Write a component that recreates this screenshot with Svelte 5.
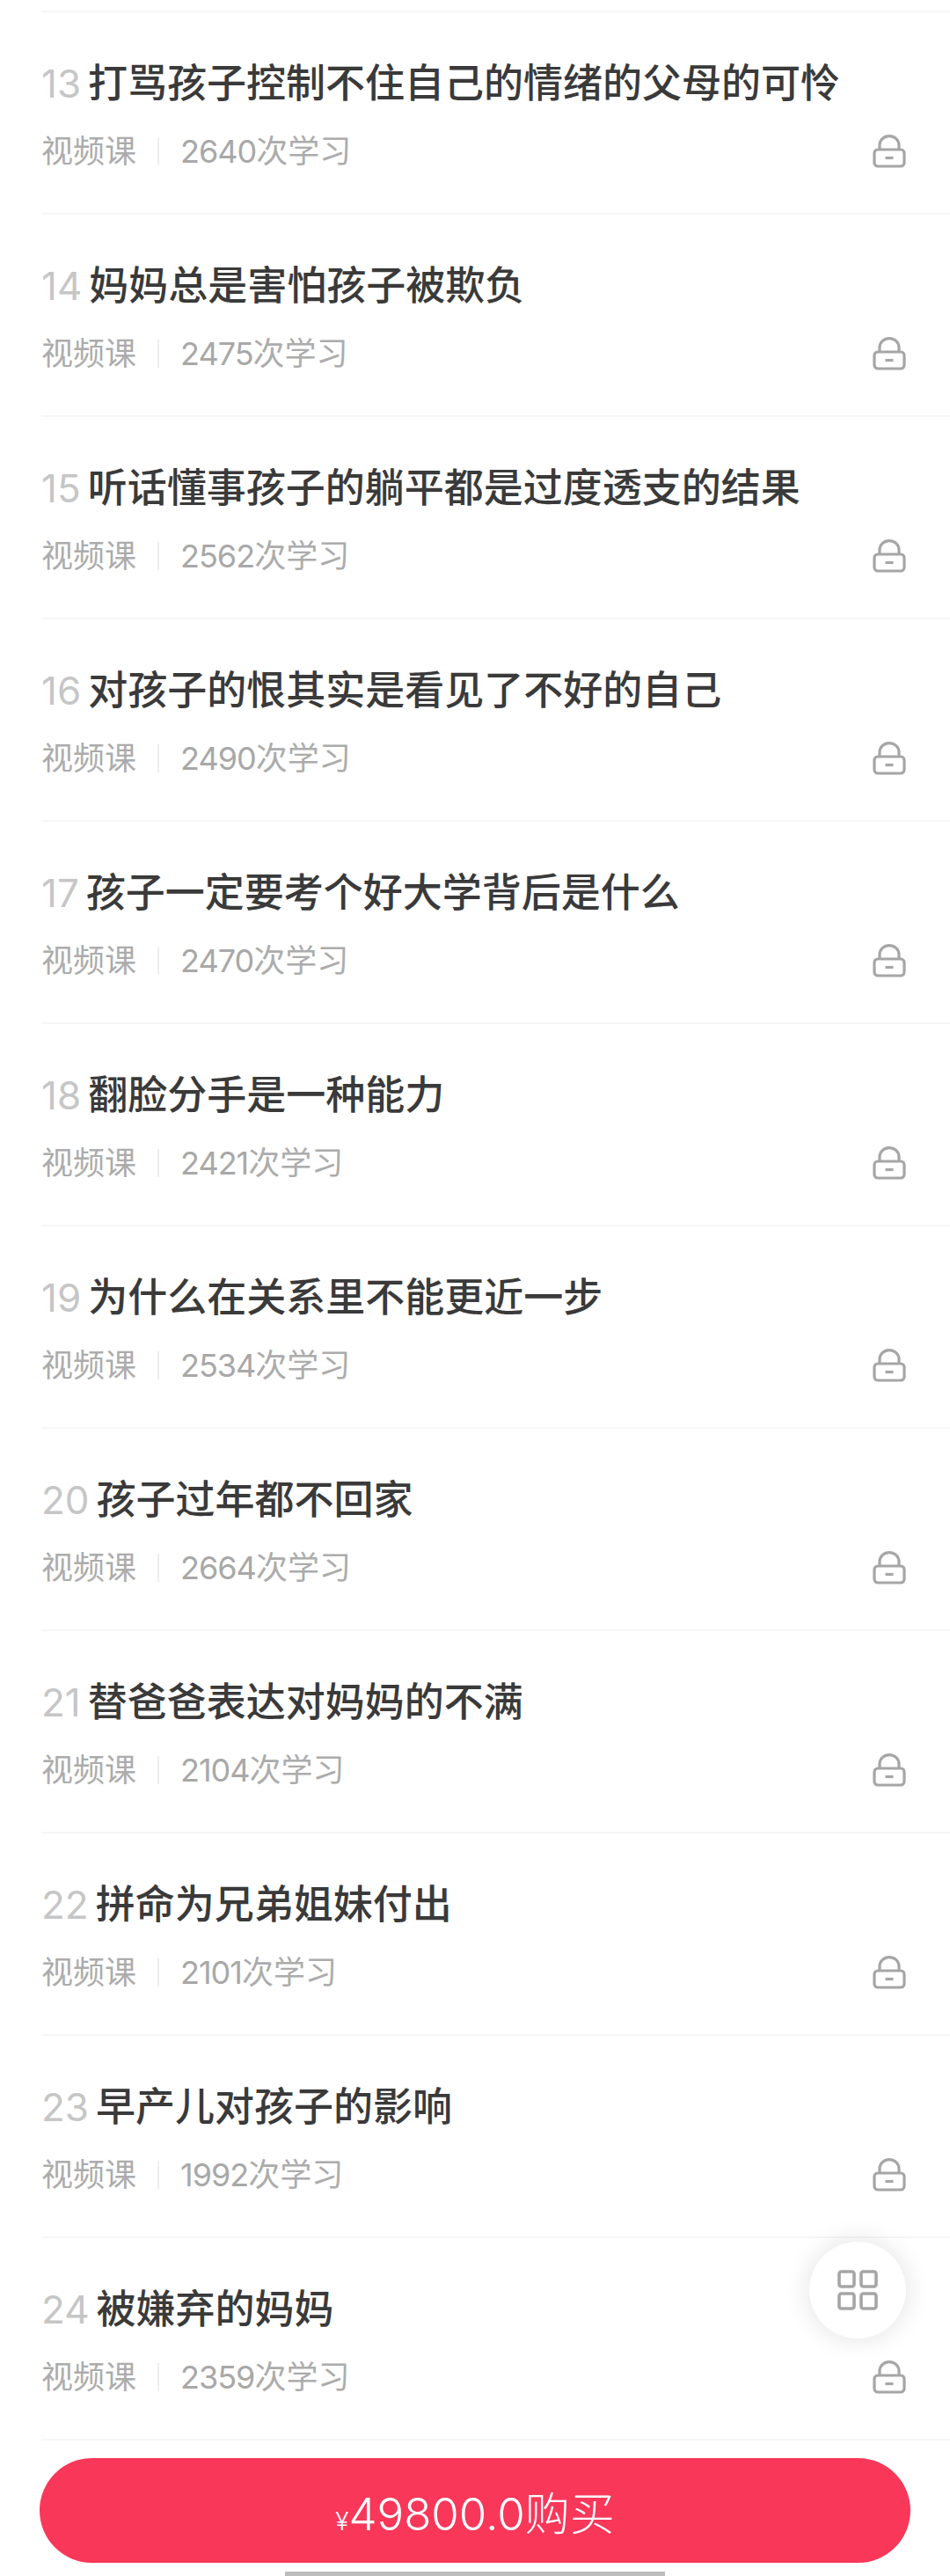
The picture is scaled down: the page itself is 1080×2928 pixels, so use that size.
<script>
  const lessons = [
    { no: 13, title: '打骂孩子控制不住自己的情绪的父母的可怜', count: 2640 },
    { no: 14, title: '妈妈总是害怕孩子被欺负', count: 2475 },
    { no: 15, title: '听话懂事孩子的躺平都是过度透支的结果', count: 2562 },
    { no: 16, title: '对孩子的恨其实是看见了不好的自己', count: 2490 },
    { no: 17, title: '孩子一定要考个好大学背后是什么', count: 2470 },
    { no: 18, title: '翻脸分手是一种能力', count: 2421 },
    { no: 19, title: '为什么在关系里不能更近一步', count: 2534 },
    { no: 20, title: '孩子过年都不回家', count: 2664 },
    { no: 21, title: '替爸爸表达对妈妈的不满', count: 2104 },
    { no: 22, title: '拼命为兄弟姐妹付出', count: 2101 },
    { no: 23, title: '早产儿对孩子的影响', count: 1992 },
    { no: 24, title: '被嫌弃的妈妈', count: 2359 }
  ];
</script>

<div class="page">
  <ul class="list">
    {#each lessons as item (item.no)}
      <li class="row">
        <div class="info">
          <div class="title"><span class="no">{item.no}</span>{item.title}</div>
          <div class="meta">
            <span>视频课</span>
            <i class="sep"></i>
            <span><span class="count">{item.count}</span>次学习</span>
          </div>
        </div>
        <svg class="lock" viewBox="0 0 38 38" fill="none" stroke="#a6a6a6" stroke-width="3.2" aria-hidden="true">
          <path d="M8 17V12a11 10.4 0 0 1 22 0v5" />
          <rect x="2" y="17" width="34" height="19" rx="4" />
          <path d="M14.5 26.5h9" />
        </svg>
      </li>
    {/each}
  </ul>

  <button class="buy"><small>¥</small>49800.0购买</button>
  <div class="home-bar"></div>

  <div class="fab">
    <svg viewBox="0 0 46 46" fill="none" stroke="#a6a6a6" stroke-width="3.6" aria-hidden="true">
      <rect x="2" y="2" width="17" height="17" rx="2.5" />
      <rect x="27" y="2" width="17" height="17" rx="2.5" />
      <rect x="2" y="27" width="17" height="17" rx="2.5" />
      <rect x="27" y="27" width="17" height="17" rx="2.5" />
    </svg>
  </div>
</div>

<style>
  :global(body) {
    margin: 0;
    background: #fff;
  }

  .page {
    position: relative;
    height: 2928px;
    overflow: hidden;
    padding-top: 12px;
    box-sizing: border-box;
    font-family: Inter, "Noto Sans CJK SC", sans-serif;
  }

  .list {
    list-style: none;
    margin: 0 0 0 47px;
    padding: 0;
    border-bottom: 2px solid #f6f6f6;
  }

  .row {
    display: flex;
    align-items: flex-start;
    justify-content: space-between;
    height: 228px;
    padding-right: 50px;
    border-top: 2px solid #f6f6f6;
  }

  .title {
    display: flex;
    align-items: center;
    gap: 8px;
    margin-top: 55px;
    height: 52px;
    font-size: 45px;
    font-weight: 500;
    line-height: 52px;
    color: #3a3a3a;
    white-space: nowrap;
  }

  .no {
    font-size: 44px;
    font-weight: 400;
    color: #c6c6c6;
  }

  .meta {
    display: flex;
    align-items: center;
    margin-top: 29px;
    height: 44px;
    font-size: 36px;
    line-height: 44px;
    color: #acacac;
  }

  .count {
    font-weight: 400;
    color: #a8a8a8;
    letter-spacing: -1px;
  }

  .sep {
    width: 2px;
    height: 32px;
    margin: 0 24px 0 24px;
    background: #eeeeee;
  }

  .lock {
    width: 38px;
    height: 38px;
    margin-top: 139px;
  }

  .buy {
    display: block;
    width: 990px;
    height: 119px;
    margin: 20px 0 0 45px;
    padding: 0;
    border: none;
    border-radius: 60px;
    background: #f93759;
    color: #fff;
    font: inherit;
    font-size: 51px;
    font-weight: 300;
  }

  .buy small {
    font-size: 28px;
  }

  .home-bar {
    width: 432px;
    height: 6px;
    margin: 10px 0 0 324px;
    background: #bdbdbd;
  }

  .fab {
    position: absolute;
    left: 920px;
    top: 2548px;
    width: 110px;
    height: 110px;
    display: flex;
    align-items: center;
    justify-content: center;
    border-radius: 50%;
    background: #fff;
    box-shadow: 0 0 30px rgba(0, 0, 0, 0.12);
  }

  .fab svg {
    width: 46px;
    height: 46px;
  }
</style>
